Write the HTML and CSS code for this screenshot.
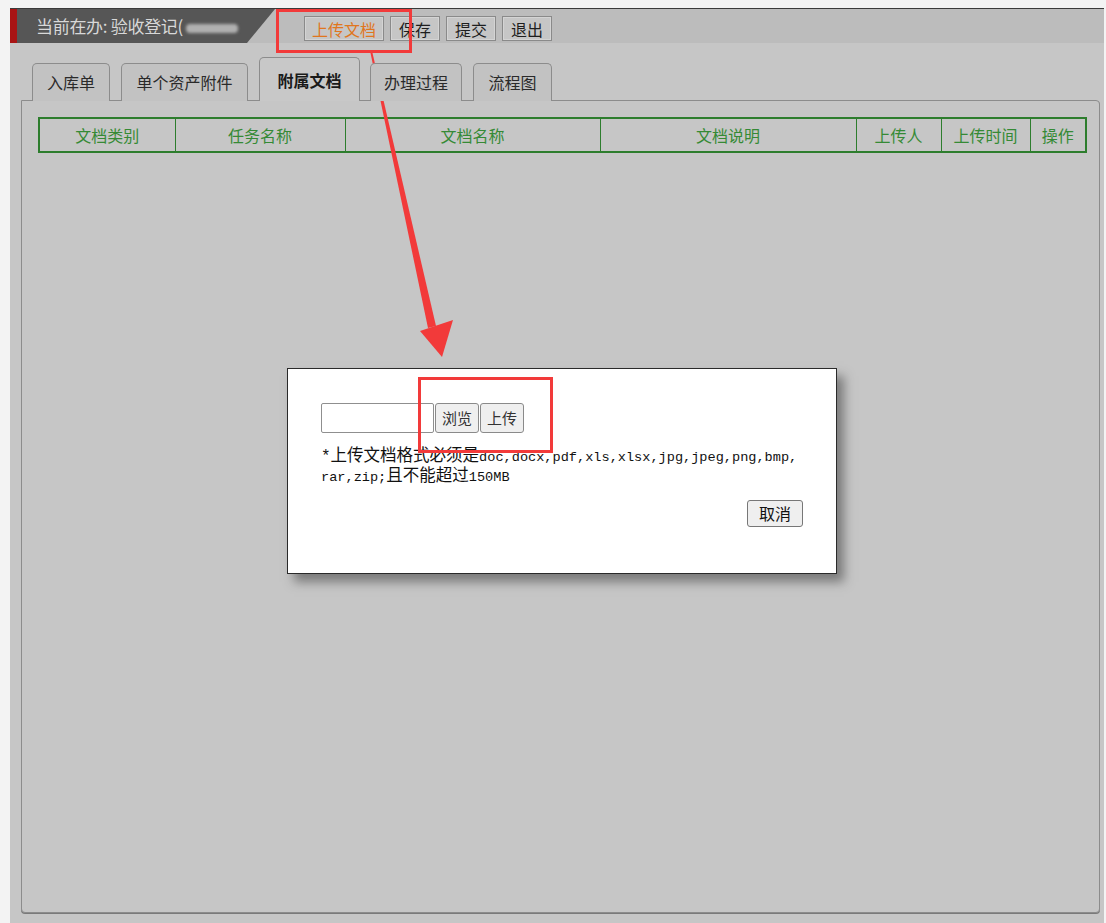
FILE: index.html
```html
<!DOCTYPE html>
<html lang="zh-CN">
<head>
<meta charset="utf-8">
<title>验收登记</title>
<link rel="stylesheet" href="styles.css">
</head>
<body>
<div class="app">
  <header class="topbar">
    <div class="title">当前在办: 验收登记(<span class="masked"></span></div>
    <nav class="actions">
      <button class="tool-btn primary">上传文档</button>
      <button class="tool-btn">保存</button>
      <button class="tool-btn">提交</button>
      <button class="tool-btn">退出</button>
    </nav>
  </header>
  <main class="main">
    <div class="tabs">
      <div class="tab tab-stock">入库单</div>
      <div class="tab tab-asset">单个资产附件</div>
      <div class="tab tab-docs active">附属文档</div>
      <div class="tab tab-history">办理过程</div>
      <div class="tab tab-flow">流程图</div>
    </div>
    <section class="panel">
      <table class="doc-table">
        <colgroup>
          <col class="c1"><col class="c2"><col class="c3"><col class="c4"><col class="c5"><col class="c6"><col class="c7">
        </colgroup>
        <thead>
          <tr>
            <th>文档类别</th>
            <th>任务名称</th>
            <th>文档名称</th>
            <th>文档说明</th>
            <th>上传人</th>
            <th>上传时间</th>
            <th>操作</th>
          </tr>
        </thead>
      </table>
    </section>
  </main>
</div>

<div class="dialog">
  <div class="upload-row">
    <input class="file-field" type="text">
    <button class="dlg-btn">浏览</button>
    <button class="dlg-btn">上传</button>
  </div>
  <p class="hint"><span class="star">*</span><span class="cjk">上传文档格式必须是</span>doc,docx,pdf,xls,xlsx,jpg,jpeg,png,bmp,<br>rar,zip;<span class="cjk">且不能超过</span>150MB</p>
  <div class="dlg-footer">
    <button class="dlg-btn cancel">取消</button>
  </div>
</div>

<svg class="marks" width="1106" height="923" viewBox="0 0 1106 923">
  <rect x="277.5" y="10.5" width="133" height="41" fill="none" stroke="#f23a3a" stroke-width="3"/>
  <rect x="419.5" y="378.5" width="132" height="73" fill="none" stroke="#f23a3a" stroke-width="3"/>
  <polygon points="370.5,53 372.5,53 436,326 428,328" fill="#f23a3a"/>
  <polygon points="420,331 453,320 442,357" fill="#f23a3a"/>
</svg>
</body>
</html>
```

FILE: styles.css
```css
html, body {
  margin: 0;
  padding: 0;
}

body {
  width: 1106px;
  height: 923px;
  background: #f3f3f3;
  position: relative;
  overflow: hidden;
  font-family: "Noto Sans CJK SC", "Liberation Sans", sans-serif;
}

.app {
  margin: 8px 0 0 10px;
  width: 1094px;
  height: 915px;
  display: flex;
  flex-direction: column;
}

/* top tool bar */
.topbar {
  height: 34px;
  border-top: 1px solid #3a3a3a;
  background: #bcbcbc;
  display: flex;
  align-items: stretch;
  flex-shrink: 0;
}

.title {
  width: 265px;
  border-left: 7px solid #a81414;
  background: #565656;
  color: #d8d8d8;
  font-size: 17px;
  line-height: 33px;
  padding-left: 19px;
  box-sizing: border-box;
  clip-path: polygon(0 0, 100% 0, calc(100% - 28px) 100%, 0 100%);
  white-space: nowrap;
  letter-spacing: -0.3px;
}

.masked {
  display: inline-block;
  width: 52px;
  height: 9px;
  margin-left: 3px;
  vertical-align: middle;
  background: #b0b0b0;
  border-radius: 4px;
  filter: blur(1.5px);
}

.actions {
  display: flex;
  gap: 6px;
  padding: 7px 0 0 29px;
  align-items: flex-start;
}

.tool-btn {
  height: 25px;
  padding: 0 8px;
  border: 1px solid #8a8a8a;
  box-shadow: inset 0 0 0 1px #d4d4d4;
  background: #c6c6c6;
  color: #1e1e1e;
  font-family: inherit;
  font-size: 16px;
  line-height: 22px;
  border-radius: 0;
}

.tool-btn.primary {
  padding: 0 7px;
  color: #e0761e;
}

/* main tabbed area */
.main {
  flex: 1;
  background: #c6c6c6;
  padding: 14px 4px 10px 11px;
  display: flex;
  flex-direction: column;
}

.tabs {
  display: flex;
  align-items: flex-end;
  gap: 11px;
  padding-left: 11px;
  margin-bottom: -1px;
  position: relative;
  z-index: 1;
}

.tab {
  height: 37px;
  box-sizing: content-box;
  border: 1px solid #8c8c8c;
  border-bottom: none;
  border-radius: 5px 5px 0 0;
  background: #c2c2c2;
  color: #2a2a2a;
  font-size: 16px;
  line-height: 37px;
  text-align: center;
}

.tab-stock { width: 76px; }
.tab-asset { width: 125px; }
.tab-docs { width: 99px; }
.tab-history { width: 90px; }
.tab-flow { width: 77px; }

.tab.active {
  height: 43px;
  line-height: 45px;
  background: #c8c8c8;
  font-weight: bold;
  color: #1a1a1a;
  margin-right: -1px;
}

.panel {
  flex: 1;
  border: 1px solid #8c8c8c;
  border-radius: 0 4px 4px 4px;
  background: #c6c6c6;
  padding: 16px 16px;
  box-shadow: 0 1px 0 #7a7a7a;
}

.doc-table {
  width: 1047px;
  border-collapse: collapse;
  border: 2px solid #2d7d2d;
  table-layout: fixed;
}

.doc-table col.c1 { width: 136px; }
.doc-table col.c2 { width: 170px; }
.doc-table col.c3 { width: 255px; }
.doc-table col.c4 { width: 256px; }
.doc-table col.c5 { width: 85px; }
.doc-table col.c6 { width: 89px; }
.doc-table col.c7 { width: 56px; }

.doc-table th {
  height: 32px;
  border: 1px solid #2d7d2d;
  color: #358a35;
  font-weight: normal;
  font-size: 16px;
  padding: 0;
  text-align: center;
}

/* upload dialog */
.dialog {
  position: absolute;
  left: 287px;
  top: 368px;
  width: 550px;
  height: 206px;
  box-sizing: border-box;
  background: #fff;
  border: 1px solid #2a2a2a;
  box-shadow: 7px 8px 10px rgba(60, 60, 60, 0.55);
  padding: 34px 33px 0 33px;
}

.upload-row {
  display: flex;
  align-items: stretch;
  height: 30px;
}

.file-field {
  width: 113px;
  height: 30px;
  box-sizing: border-box;
  border: 1px solid #8f8f8f;
  border-radius: 2px;
  margin: 0;
}

.dlg-btn {
  height: 30px;
  padding: 0 6px;
  margin: 0 0 0 1px;
  border: 1px solid #8a8a8a;
  border-radius: 3px;
  background: #efefef;
  color: #333;
  font-family: "Noto Sans CJK SC", sans-serif;
  font-size: 15px;
  line-height: 26px;
}

.hint {
  margin: 14px 0 0 0;
  font-family: "Liberation Mono", monospace;
  font-size: 13.6px;
  line-height: 19px;
  color: #111;
}

.hint .star {
  font-size: 16px;
  line-height: 16px;
}

.hint .cjk {
  font-family: "Noto Sans CJK SC", sans-serif;
  font-size: 16.5px;
  line-height: 15px;
}

.dlg-footer {
  display: flex;
  justify-content: flex-end;
  margin-top: 13px;
}

.dlg-btn.cancel {
  height: 27px;
  padding: 0 11px;
  font-size: 16px;
  line-height: 23px;
  color: #111;
  border-color: #777;
}

/* annotation marks drawn over the page */
.marks {
  position: absolute;
  left: 0;
  top: 0;
  pointer-events: none;
}
```
